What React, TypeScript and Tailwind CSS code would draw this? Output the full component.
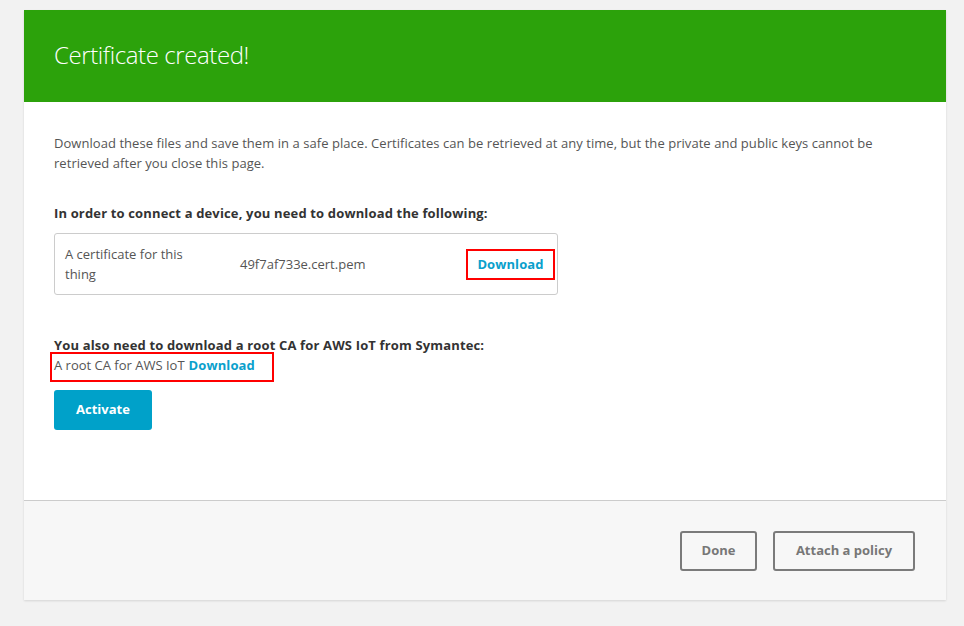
export default function App() {
  return (
    <div
      className="min-h-screen bg-[#f2f2f2] px-6 pt-[10px] text-[13px] text-[#555]"
      style={{ fontFamily: '"Open Sans", "Noto Sans", Arial, sans-serif' }}
    >
      <div className="flex h-[590px] w-[922px] flex-col bg-white shadow-[0_1px_2px_rgba(0,0,0,0.12)]">
        <div className="flex h-[92px] shrink-0 items-center bg-[#2ca20b] px-[30px] pb-[2px]">
          <h1 className="text-[24px] font-light tracking-[-0.4px] text-white">Certificate created!</h1>
        </div>

        <div className="flex-1 px-[30px] pt-[31px]">
          <p className="leading-5 tracking-[0.05px]">
            Download these files and save them in a safe place. Certificates can be retrieved at any time, but the
            private and public keys cannot be retrieved after you close this page.
          </p>

          <p className="mt-[30px] font-bold leading-5 tracking-[0.15px] text-[#333]">
            In order to connect a device, you need to download the following:
          </p>

          <div className="mt-[10px] flex h-[62px] w-[504px] items-center rounded-[3px] border border-[#ccc] pl-[10px] pr-[2px]">
            <div className="w-[175px] leading-5">
              A certificate for this
              <br />
              thing
            </div>
            <div className="flex-1 leading-5">49f7af733e.cert.pem</div>
            <button className="flex h-[31px] w-[89px] items-center justify-center border-2 border-[#f00] pt-[1px] font-bold tracking-[0.1px] text-[#0aa0cc]">
              Download
            </button>
          </div>

          <p className="mt-[40px] font-bold leading-5 tracking-[0.15px] text-[#333]">
            You also need to download a root CA for AWS IoT from Symantec:
          </p>
          <div className="-ml-1 -mt-[3px] flex h-[30px] w-[224px] items-start border-2 border-[#f00] pl-[2px] pt-[1px] leading-5">
            <span>A root CA for AWS IoT</span>
            <button className="ml-1 font-bold tracking-[0.1px] text-[#0aa0cc]">Download</button>
          </div>

          <button className="mt-[8px] h-[40px] w-[98px] rounded-[3px] bg-[#00a1c9] font-bold text-white">
            Activate
          </button>
        </div>

        <div className="flex h-[100px] shrink-0 items-center justify-end gap-4 border-t border-[#ccc] bg-[#f7f7f7] pr-[31px]">
          <button className="h-[40px] w-[77px] rounded-[3px] border-2 border-[#7b7b7b] font-bold text-[#777]">
            Done
          </button>
          <button className="h-[40px] w-[142px] rounded-[3px] border-2 border-[#7b7b7b] font-bold text-[#777]">
            Attach a policy
          </button>
        </div>
      </div>
    </div>
  );
}
